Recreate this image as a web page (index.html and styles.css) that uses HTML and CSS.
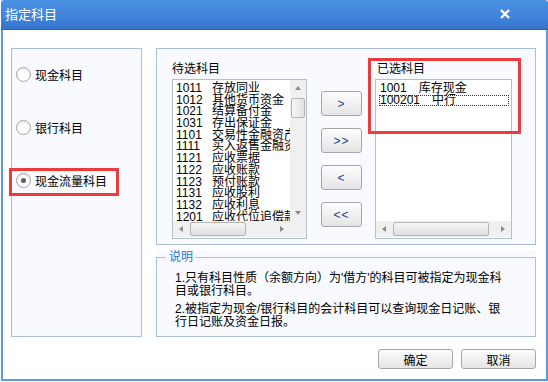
FILE: index.html
```
<!DOCTYPE html>
<html lang="zh-CN">
<head>
    <meta charset="UTF-8">
    <title>指定科目</title>
    <link rel="stylesheet" href="styles.css">
</head>
<body>
    <div class="dialog">
        <div class="titlebar">
            <span class="title">指定科目</span>
            <svg class="close" width="10" height="10" viewBox="0 0 10 10">
                <path d="M1 1 L9 9 M9 1 L1 9" stroke="#fff" stroke-width="2.4"/>
            </svg>
        </div>

        <div class="content">
            <div class="kinds">
                <div class="kind"><span class="radio"></span>现金科目</div>
                <div class="kind"><span class="radio"></span>银行科目</div>
                <div class="kind marked"><span class="radio checked"></span>现金流量科目</div>
            </div>

            <div class="main">
                <div class="picker">
                    <div class="col">
                        <div class="caption">待选科目</div>
                        <div class="list source">
                            <div class="rows">
                                <div class="row"><span class="code">1011</span>存放同业</div>
                                <div class="row"><span class="code">1012</span>其他货币资金</div>
                                <div class="row"><span class="code">1021</span>结算备付金</div>
                                <div class="row"><span class="code">1031</span>存出保证金</div>
                                <div class="row"><span class="code">1101</span>交易性金融资产</div>
                                <div class="row"><span class="code">1111</span>买入返售金融资产</div>
                                <div class="row"><span class="code">1121</span>应收票据</div>
                                <div class="row"><span class="code">1122</span>应收账款</div>
                                <div class="row"><span class="code">1123</span>预付账款</div>
                                <div class="row"><span class="code">1131</span>应收股利</div>
                                <div class="row"><span class="code">1132</span>应收利息</div>
                                <div class="row"><span class="code">1201</span>应收代位追偿款</div>
                            </div>
                            <div class="vscroll">
                                <div class="arrow"><span class="tri up"></span></div>
                                <div class="track"><div class="vthumb"></div></div>
                                <div class="arrow"><span class="tri down"></span></div>
                            </div>
                            <div class="hscroll">
                                <div class="arrow"><span class="tri left"></span></div>
                                <div class="track"><div class="hthumb"></div></div>
                                <div class="arrow"><span class="tri right"></span></div>
                            </div>
                            <div class="corner"></div>
                        </div>
                    </div>

                    <div class="moves">
                        <button class="move">&gt;</button>
                        <button class="move">&gt;&gt;</button>
                        <button class="move">&lt;</button>
                        <button class="move">&lt;&lt;</button>
                    </div>

                    <div class="col chosen">
                        <div class="caption">已选科目</div>
                        <div class="list target">
                            <div class="rows">
                                <div class="row"><span class="num">1001</span>库存现金</div>
                                <div class="row focus"><span class="num">100201</span>中行</div>
                            </div>
                            <div class="hscroll">
                                <div class="arrow"><span class="tri left"></span></div>
                                <div class="track"><div class="hthumb wide"></div></div>
                                <div class="arrow"><span class="tri right"></span></div>
                            </div>
                        </div>
                    </div>

                    <div class="mark"></div>
                </div>

                <div class="note">
                    <fieldset>
                        <legend>说明</legend>
                        <p>1.只有科目性质（余额方向）为'借方'的科目可被指定为现金科<br>目或银行科目。</p>
                        <p>2.被指定为现金/银行科目的会计科目可以查询现金日记账、银<br>行日记账及资金日报。</p>
                    </fieldset>
                </div>

                <div class="actions">
                    <button class="btn">确定</button>
                    <button class="btn">取消</button>
                </div>
            </div>
        </div>
    </div>
</body>
</html>
```

FILE: styles.css
```
* {
    margin: 0;
    padding: 0;
    box-sizing: border-box;
}

body {
    background-color: #fff;
    font-family: 'Liberation Sans', 'Noto Sans CJK SC', sans-serif;
    font-size: 12px;
    color: #000;
}

.dialog {
    width: 547px;
    height: 381px;
    margin-left: 1px;
    display: flex;
    flex-direction: column;
}

.titlebar {
    height: 30px;
    display: flex;
    align-items: center;
    justify-content: space-between;
    padding: 0 38px 0 4px;
    background: linear-gradient(#4a92e4, #3d80d8 70%, #3774cc);
    border-bottom: 1px solid #2c62b4;
    border-radius: 3px 3px 0 0;
}

.title {
    color: #fff;
    font-size: 13px;
    margin-top: -2px;
}

.close {
    margin-top: -1px;
}

.content {
    flex: 1;
    display: flex;
    gap: 14px;
    padding: 18px 0 0 8px;
    border: 2px solid #5f98e2;
    border-top: none;
}

/* left: account kinds */
.kinds {
    width: 131px;
    height: 289px;
    border: 1px solid #a9c0da;
    background-color: #f8faff;
    padding: 17px 0 0 4px;
    display: flex;
    flex-direction: column;
    gap: 37px;
}

.kind {
    position: relative;
    display: flex;
    align-items: center;
    height: 16px;
    gap: 4px;
}

.radio {
    width: 15px;
    height: 15px;
    border-radius: 50%;
    border: 1px solid #a4a4a4;
    background: radial-gradient(circle at 50% 70%, #fff 40%, #e6e6e6);
    display: inline-flex;
    align-items: center;
    justify-content: center;
}

.radio.checked:after {
    content: "";
    width: 5px;
    height: 5px;
    border-radius: 50%;
    background-color: #606060;
}

.kind.marked:before {
    content: "";
    position: absolute;
    left: -7px;
    top: -4px;
    width: 104px;
    height: 22px;
    border: 3px solid #ec3a3d;
}

/* right column */
.main {
    width: 380px;
    display: flex;
    flex-direction: column;
}

.picker {
    position: relative;
    height: 197px;
    border: 1px solid #a9c0da;
    background-color: #f8faff;
    display: flex;
    padding: 13px 0 0 15px;
}

.caption {
    height: 14px;
    line-height: 14px;
    margin-bottom: 3px;
}

.chosen {
    margin-left: 13px;
}

.chosen .caption {
    padding-left: 2px;
}

.list {
    height: 160px;
    border: 1px solid #b4c0cc;
    background-color: #fff;
    display: grid;
}

.source {
    width: 135px;
    grid-template-columns: 117px 16px;
    grid-template-rows: 141px 16px;
}

.target {
    width: 137px;
    grid-template-rows: 141px 16px;
}

.rows {
    overflow: hidden;
    padding: 3px 0 0 3px;
    white-space: nowrap;
}

.row {
    height: 11.7px;
    line-height: 11.7px;
}

.code {
    display: inline-block;
    width: 36px;
}

.num {
    margin-right: 12px;
}

.row.focus {
    outline: 1px dotted #333;
    outline-offset: -1px;
    margin-right: 2px;
}

.target .row {
    padding-left: 1px;
}

.vscroll {
    display: flex;
    flex-direction: column;
    background-color: #f0f0f0;
}

.hscroll {
    display: flex;
    background-color: #f0f0f0;
}

.vscroll .arrow,
.hscroll .arrow {
    width: 16px;
    height: 16px;
    flex: none;
    display: flex;
    align-items: center;
    justify-content: center;
}

.track {
    flex: 1;
    display: flex;
}

.vscroll .track {
    flex-direction: column;
}

.vthumb {
    height: 20px;
    margin: 2px 1px 0;
    border: 1px solid #b6b6b6;
    border-radius: 2px;
    background: linear-gradient(90deg, #f6f6f6, #e2e2e2);
}

.hthumb {
    width: 56px;
    margin: 1px 0 1px 1px;
    border: 1px solid #b6b6b6;
    border-radius: 2px;
    background: linear-gradient(#f6f6f6, #e0e0e0);
}

.hthumb.wide {
    width: 96px;
}

.corner {
    background-color: #f0f0f0;
}

.tri {
    width: 0;
    height: 0;
    border: 3px solid transparent;
}

.tri.up {
    border-bottom: 4px solid #8a8a8a;
    border-top: none;
}

.tri.down {
    border-top: 4px solid #8a8a8a;
    border-bottom: none;
}

.tri.left {
    border-right: 4px solid #8a8a8a;
    border-left: none;
}

.tri.right {
    border-left: 4px solid #8a8a8a;
    border-right: none;
}

.moves {
    margin-left: 14px;
    padding-top: 29px;
    display: flex;
    flex-direction: column;
    gap: 12px;
}

button {
    font-family: inherit;
    font-size: 12px;
    color: #000;
    border: 1px solid #a6a6a6;
    border-radius: 3px;
    background: linear-gradient(#fdfdfd, #f1f1f1 50%, #e4e4e4);
}

.move {
    width: 41px;
    height: 25px;
    color: #1f3f8a;
    letter-spacing: 1px;
}

.mark {
    position: absolute;
    left: 211px;
    top: 9px;
    width: 153px;
    height: 76px;
    border: 3px solid #ec3a3d;
}

/* description */
.note {
    margin-top: 5px;
    height: 87px;
    background-color: #f8faff;
}

fieldset {
    height: 87px;
    border: 1px solid #a9c0da;
    padding: 8px 10px 0 18px;
}

legend {
    margin-left: -9px;
    padding: 0 3px;
    color: #2f6fd8;
    line-height: 14px;
}

fieldset p {
    line-height: 13px;
    margin-bottom: 5px;
}

.actions {
    display: flex;
    justify-content: flex-end;
    gap: 8px;
    margin-top: 12px;
}

.btn {
    width: 75px;
    height: 20px;
}
```
